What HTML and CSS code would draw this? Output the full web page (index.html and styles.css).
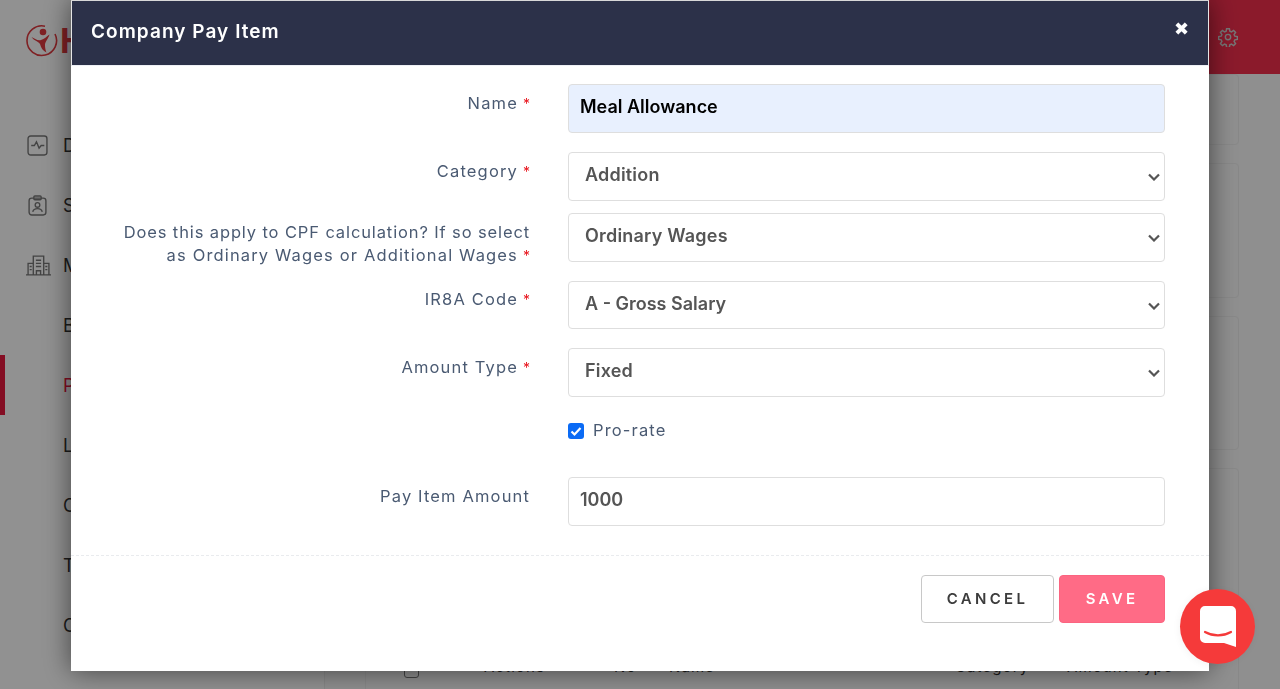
FILE: index.html
```html
<!DOCTYPE html>
<html lang="en">
<head>
<meta charset="utf-8">
<title>Company Pay Item</title>
<link rel="stylesheet" href="styles.css">
</head>
<body>
<div class="page">
  <aside class="sidebar">
    <div class="logo">
      <svg class="logo-mark" width="33" height="33" viewBox="0 0 33 33"><path d="M20 2.200A14.800 14.800 0 1 0 30 10" fill="none" stroke="#e03a40" stroke-width="1.600"/><path d="M6.500 13c3 1.500 6 4 9.500 3 3.500-1 5.500-3.500 8.500-5.500-1 4-4.500 7-4.500 10.500 0 3 .5 5 1.500 7.500-3.500-1.500-5.500-4.500-6.500-8.500-1-2.500-6-3-8.500-7z" fill="#e03a40"/><circle cx="18" cy="8" r="3.300" fill="#e03a40"/></svg>
      <span class="logo-text">HR</span>
    </div>
    <nav class="nav">
      <a class="nav-item"><svg class="nav-icon" viewBox="0 0 20 20"><rect x="1" y="1" width="18" height="18" rx="2.500"/><path d="M4 10h3l2-3.500 2.500 6 2-2.500h3"/></svg>Dashboard</a>
      <a class="nav-item"><svg class="nav-icon" viewBox="0 0 20 20"><rect x="2" y="3" width="16" height="16" rx="2.500"/><rect x="6.500" y="1" width="7" height="3.500" rx="1"/><circle cx="10" cy="9.500" r="2.200"/><path d="M5.500 16c.5-2.500 2.500-3 4.500-3s4 .5 4.500 3"/></svg>Staff</a>
      <a class="nav-item"><svg class="nav-icon nav-icon-wide" viewBox="0 0 24 20"><path d="M0 19h24M2 19V8h5M22 19V8h-5M7 19V1h10v18M10 19v-4h4v4M9.500 5h5M9.500 8h5M9.500 11h5M3.500 11h2M3.500 14h2M18.500 11h2M18.500 14h2"/></svg>Manage</a>
      <a class="nav-item nav-sub">Benefits</a>
      <a class="nav-item nav-sub nav-active">Payroll</a>
      <a class="nav-item nav-sub">Leave</a>
      <a class="nav-item nav-sub">Claims</a>
      <a class="nav-item nav-sub">Timesheet</a>
      <a class="nav-item nav-sub">Company</a>
    </nav>
  </aside>
  <main class="main">
    <header class="topbar">
      <svg class="gear" width="20" height="20" viewBox="0 0 24 24"><path d="M10.300 2h3.400l.5 3 2 .9 2.500-1.800 2.400 2.400-1.800 2.500.9 2 3 .5v3.400l-3 .5-.9 2 1.800 2.500-2.400 2.400-2.500-1.800-2 .9-.5 3h-3.400l-.5-3-2-.9-2.500 1.800-2.400-2.400 1.800-2.500-.9-2-3-.5v-3.400l3-.5.9-2-1.800-2.500 2.400-2.400 2.500 1.800 2-.9z"/><circle cx="12" cy="12" r="3.200"/></svg>
    </header>
    <div class="content">
      <div class="card card-1"></div>
      <div class="card card-2"></div>
      <div class="card card-3"></div>
      <div class="card card-4">
        <div class="table-head">
          <span class="check"></span><span class="th th-actions">Actions</span><span class="th th-no">No</span><span class="th th-name">Name</span><span class="th th-cat">Category</span><span class="th th-type">Amount Type</span>
        </div>
      </div>
    </div>
  </main>
</div>
<div class="overlay"></div>
<section class="modal">
  <header class="modal-header">
    <h2 class="modal-title">Company Pay Item</h2>
    <span class="modal-close">&#10006;</span>
  </header>
  <form class="modal-body">
    <div class="row row-name">
      <label class="label">Name<span class="req">*</span></label>
      <div class="field field-filled">Meal Allowance</div>
    </div>
    <div class="row row-cat">
      <label class="label">Category<span class="req">*</span></label>
      <div class="field field-select">Addition<svg class="chev" viewBox="0 0 12 8"><path d="M1 1.500l5 5 5-5"/></svg></div>
    </div>
    <div class="row row-cpf">
      <label class="label"><span class="line-tight">Does this apply to CPF calculation? If so select</span><br>as Ordinary Wages or Additional Wages<span class="req">*</span></label>
      <div class="field field-select">Ordinary Wages<svg class="chev" viewBox="0 0 12 8"><path d="M1 1.500l5 5 5-5"/></svg></div>
    </div>
    <div class="row row-ir8a">
      <label class="label">IR8A Code<span class="req">*</span></label>
      <div class="field field-select">A - Gross Salary<svg class="chev" viewBox="0 0 12 8"><path d="M1 1.500l5 5 5-5"/></svg></div>
    </div>
    <div class="row row-type">
      <label class="label">Amount Type<span class="req">*</span></label>
      <div class="field field-select">Fixed<svg class="chev" viewBox="0 0 12 8"><path d="M1 1.500l5 5 5-5"/></svg></div>
    </div>
    <div class="row row-check">
      <span class="label"></span>
      <label class="check-line"><span class="checkbox"><svg viewBox="0 0 16 16" width="16" height="16"><path d="M3.500 8.500l3 3 6-6.500"/></svg></span>Pro-rate</label>
    </div>
    <div class="row row-amount">
      <label class="label label-plain">Pay Item Amount</label>
      <div class="field field-input">1000</div>
    </div>
  </form>
  <footer class="modal-footer">
    <button class="btn btn-cancel" type="button">CANCEL</button>
    <button class="btn btn-save" type="button">SAVE</button>
  </footer>
</section>
<button class="chat" type="button" aria-label="Chat">
  <svg width="36" height="41" viewBox="0 0 36 41"><path d="M5 0h26a5 5 0 0 1 5 5v36l-12-4H5a5 5 0 0 1-5-5V5a5 5 0 0 1 5-5z" fill="#fff"/><path d="M5 26c8 4.500 18 4.500 26 0" fill="none" stroke="#f53a3a" stroke-width="2.200" stroke-linecap="round"/></svg>
</button>
</body>
</html>
```
FILE: styles.css
```css
* { box-sizing: border-box; }
html, body { margin: 0; height: 100%; overflow: hidden; }
body { font-family: Inter, "Open Sans", "Liberation Sans", sans-serif; background: #fff; color: #333; }

.page { display: flex; height: 689px; overflow: hidden; }
.sidebar { width: 325px; flex: none; background: #fff; border-right: 1px solid #eee; }
.logo { display: flex; align-items: center; gap: 2px; height: 74px; padding: 6px 0 0 25px; }
.logo-text { font-size: 34px; font-weight: 700; color: #e03a40; }
.nav { display: flex; flex-direction: column; padding-top: 41px; }
.nav-item { display: flex; align-items: center; height: 60px; padding-left: 27px; font-size: 18px; color: #333; }
.nav-sub { padding-left: 63px; }
.nav-active { color: #e8173f; box-shadow: inset 5px 0 0 #e8173f; }
.nav-icon { width: 21px; height: 21px; margin-right: 15px; fill: none; stroke: #777; stroke-width: 1.300; flex: none; }
.nav-icon-wide { width: 25px; margin-left: -1px; margin-right: 12px; }

.main { flex: 1; display: flex; flex-direction: column; min-width: 0; }
.topbar { height: 74px; flex: none; background: #f42e4d; display: flex; align-items: center; justify-content: flex-end; padding-right: 42px; }
.gear { fill: none; stroke: #cfcfcf; stroke-width: 1.700; }
.content { flex: 1; padding: 0 41px 0 40px; display: flex; flex-direction: column; gap: 18px; background: #fbfbfb; }
.card { background: #fbfbfb; border: 1px solid #f0f0f0; border-radius: 4px; flex: none; }
.card-1 { height: 71px; }
.card-2 { height: 135px; }
.card-3 { height: 134px; }
.card-4 { height: 260px; }
.table-head { padding: 188px 0 0 38px; display: flex; font-size: 15px; letter-spacing: 1.100px; color: #333; }
.check { width: 15px; height: 15px; border: 1px solid #777; border-radius: 3px; flex: none; margin-top: 6px; }
.th-actions { margin-left: 65px; width: 130px; }
.th-no { width: 55px; }
.th-name { width: 286px; }
.th-cat { width: 112px; }

.overlay { position: fixed; inset: 0; background: rgba(0, 0, 0, .43); }

.modal { position: fixed; left: 71px; top: 0; width: 1138px; height: 671px; background: #fff; border-top: 1px solid #d8d8d8; box-shadow: 0 0 26px rgba(0, 0, 0, .55); display: flex; flex-direction: column; }
.modal-header { height: 65px; flex: none; background: #2c3149; border-left: 1px solid #e6e6e6; border-right: 1px solid #e6e6e6; border-bottom: 1px solid #eef0f5; display: flex; align-items: center; justify-content: space-between; padding: 0 19px 4px 19px; }
.modal-title { margin: 0; font-size: 19px; font-weight: 600; color: #fff; letter-spacing: 1.050px; }
.modal-close { font-family: "DejaVu Sans", sans-serif; font-size: 18px; line-height: 18px; color: #fff; font-weight: 700; margin-top: -5px; }

.modal-body { flex: none; height: 489px; position: relative; }
.row { display: flex; position: absolute; left: 0; right: 44px; }
.row-name { top: 18px; }
.row-cat { top: 86px; }
.row-cpf { top: 147px; }
.row-ir8a { top: 215px; }
.row-ir8a .field { height: 48px; letter-spacing: 0; }
.row-type { top: 282px; }
.row-check { top: 354px; }
.row-amount { top: 411px; }
.label { width: 459px; flex: none; padding-top: 8px; text-align: right; font-size: 16.500px; line-height: 23px; color: #4a5a72; letter-spacing: 1.150px; }
.line-tight { letter-spacing: .88px; }
.row-ir8a .label { padding-top: 7px; }
.req { color: #e8141c; margin-left: 5px; font-size: 14px; letter-spacing: 0; }
.field { margin-left: 38px; flex: 1; height: 49px; border: 1px solid #dedede; border-radius: 4px; font-size: 18px; font-weight: 600; color: #555; display: flex; align-items: center; justify-content: space-between; padding: 0 4px 4px 16px; background: #fff; }
.field-select { letter-spacing: .2px; }
.field-filled { background: #e8f0fe; color: #000; padding-left: 11px; }
.field-input { padding-left: 11px; }
.chev { width: 12px; height: 8px; fill: none; stroke: #555; stroke-width: 2.200; margin-top: 5px; }
.check-line { margin-left: 38px; display: flex; align-items: center; gap: 9px; font-size: 16.500px; color: #4a5a72; letter-spacing: 1.150px; }
.checkbox { width: 16px; height: 16px; border-radius: 3px; background: #0b6bf5; display: block; margin-top: 2px; }
.checkbox svg { display: block; fill: none; stroke: #fff; stroke-width: 2.200; }

.modal-footer { border-top: 1px dashed #e9ebee; flex: 1; display: flex; justify-content: flex-end; align-items: flex-start; gap: 5px; padding: 19px 44px 0 0; }
.btn { height: 48px; border-radius: 4px; font-family: inherit; font-size: 15px; font-weight: 600; letter-spacing: 3.300px; padding: 0 0 2px; }
.btn-cancel { width: 133px; background: #fff; border: 1px solid #c8c8c8; color: #3c3c3c; }
.btn-save { width: 106px; background: #ff6b86; border: 1px solid #fb6480; color: #fff; }

.chat { position: fixed; left: 1180px; top: 589px; width: 75px; height: 75px; border-radius: 50%; border: 0; padding: 0; background: #f53a3a; display: flex; align-items: center; justify-content: center; box-shadow: 0 1px 8px rgba(0,0,0,.06); }
```
